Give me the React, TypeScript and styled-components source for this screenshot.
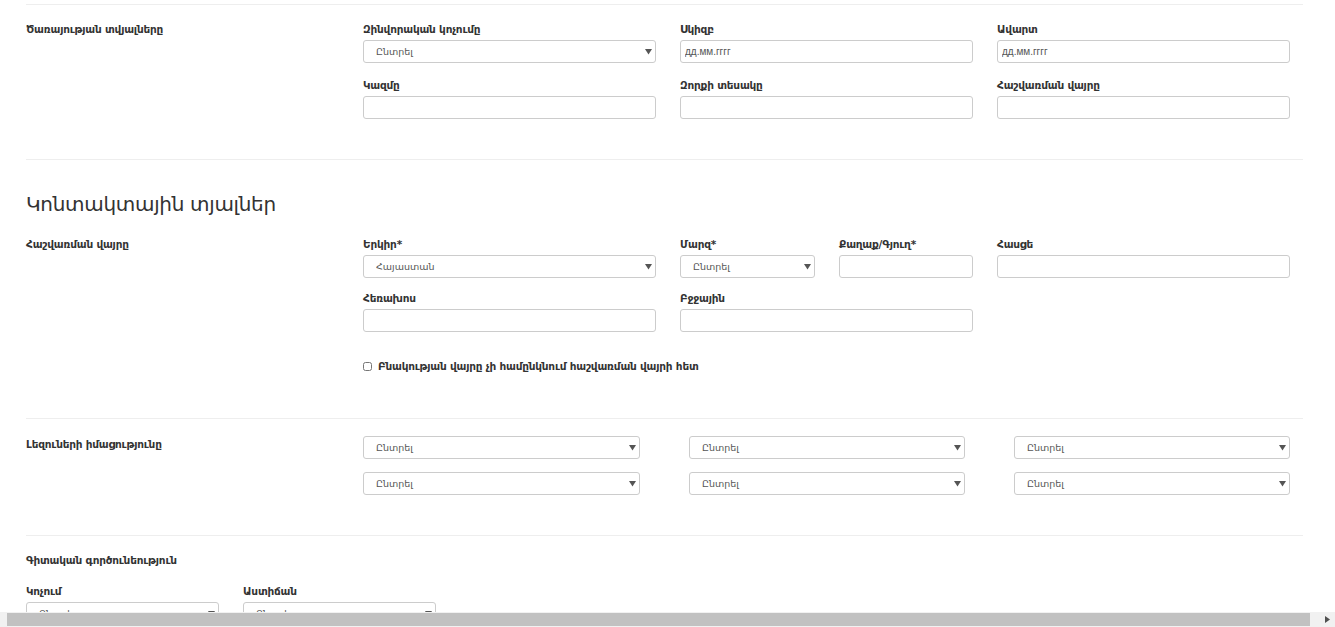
import React from 'react';
import styled, { createGlobalStyle } from 'styled-components';

const GlobalStyle = createGlobalStyle`
  html, body {
    margin: 0;
    padding: 0;
    background: #fff;
    overflow: hidden;
  }
  body {
    font-family: "DejaVu Sans", "Liberation Sans", "Noto Sans", sans-serif;
    color: #333;
  }
`;

const Page = styled.div`
  width: 1277px;
  padding: 4px 32px 0 26px;
  height: 627px;
  box-sizing: content-box;
`;

const Section = styled.section<{ $top: number; $bottom: number }>`
  border-top: 1px solid #eee;
  padding-top: ${({ $top }) => $top}px;
  padding-bottom: ${({ $bottom }) => $bottom}px;
`;

const Row = styled.div`
  display: grid;
  grid-template-columns: 337px 928px;
`;

const SideLabel = styled.div`
  font-size: 10.5px;
  font-weight: bold;
  line-height: 14px;
  letter-spacing: -0.2px;
`;

const Fields = styled.div<{ $gap?: number }>`
  display: grid;
  grid-template-columns: 293px 293px 293px;
  column-gap: 24px;
  row-gap: ${({ $gap }) => $gap ?? 15}px;
`;

const SplitCell = styled.div`
  display: grid;
  grid-template-columns: 135px 134px;
  column-gap: 24px;
`;

const LangGrid = styled.div`
  display: grid;
  grid-template-columns: 277px 276px 276px;
  column-gap: 49px;
  row-gap: 13px;
  margin-top: -1px;
`;

const Field = styled.div`
  display: flex;
  flex-direction: column;
`;

const FieldLabel = styled.label`
  font-size: 10.5px;
  font-weight: bold;
  line-height: 14px;
  margin-bottom: 4px;
  letter-spacing: -0.2px;
`;

const TextInput = styled.input`
  box-sizing: border-box;
  height: 23px;
  width: 100%;
  border: 1px solid #ccc;
  border-radius: 3px;
  padding: 0 4px;
  font-family: "Liberation Sans", sans-serif;
  font-size: 10px;
  color: #555;
  outline: none;
  &::placeholder {
    color: #555;
  }
`;

const SelectWrap = styled.div`
  position: relative;
  width: 100%;
`;

const NativeSelect = styled.select`
  appearance: none;
  box-sizing: border-box;
  width: 100%;
  height: 23px;
  border: 1px solid #ccc;
  border-radius: 3px;
  background: #fff;
  padding: 0 22px 0 12px;
  font-family: "DejaVu Sans", "Liberation Sans", sans-serif;
  font-size: 9.5px;
  color: #555;
  outline: none;
`;

const Caret = styled.svg`
  position: absolute;
  right: 4px;
  top: 8px;
  width: 7px;
  height: 7px;
  pointer-events: none;
`;

const Select = ({ value }: { value: string }) => (
  <SelectWrap>
    <NativeSelect defaultValue={value}>
      <option>{value}</option>
    </NativeSelect>
    <Caret viewBox="0 0 7 7">
      <path d="M0 1 L7 1 L3.5 6.5 Z" fill="#555" />
    </Caret>
  </SelectWrap>
);

const Heading = styled.h2`
  margin: 0 0 21px;
  font-size: 20px;
  font-weight: normal;
  line-height: 24px;
  letter-spacing: -0.3px;
`;

const CheckRow = styled.label`
  display: flex;
  align-items: center;
  gap: 6px;
  margin-top: 27px;
  font-size: 10.5px;
  font-weight: bold;
  line-height: 14px;
  letter-spacing: -0.2px;
`;

const Check = styled.input`
  margin: 0;
  width: 9px;
  height: 9px;
`;

const SubTitle = styled.div`
  font-size: 10.5px;
  font-weight: bold;
  line-height: 14px;
  margin-bottom: 17px;
  letter-spacing: -0.2px;
`;

const SmallGrid = styled.div`
  display: grid;
  grid-template-columns: 193px 193px;
  column-gap: 24px;
`;

const Scrollbar = styled.div`
  position: fixed;
  left: 0;
  right: 0;
  bottom: 0;
  height: 15px;
  background: #f1f1f1;
  display: flex;
  align-items: center;
`;

const Thumb = styled.div`
  margin-left: 7px;
  width: 1303px;
  height: 13px;
  background: #c1c1c1;
`;

const Arrow = styled.svg`
  margin-left: 15px;
  width: 5px;
  height: 7px;
`;

const App = () => (
  <>
    <GlobalStyle />
    <Page>
      <Section $top={17} $bottom={40}>
        <Row>
          <SideLabel>Ծառայության տվյալները</SideLabel>
          <Fields>
            <Field>
              <FieldLabel>Զինվորական կոչումը</FieldLabel>
              <Select value="Ընտրել" />
            </Field>
            <Field>
              <FieldLabel>Սկիզբ</FieldLabel>
              <TextInput placeholder="дд.мм.гггг" />
            </Field>
            <Field>
              <FieldLabel>Ավարտ</FieldLabel>
              <TextInput placeholder="дд.мм.гггг" />
            </Field>
            <Field>
              <FieldLabel>Կազմը</FieldLabel>
              <TextInput />
            </Field>
            <Field>
              <FieldLabel>Զորքի տեսակը</FieldLabel>
              <TextInput />
            </Field>
            <Field>
              <FieldLabel>Հաշվառման վայրը</FieldLabel>
              <TextInput />
            </Field>
          </Fields>
        </Row>
      </Section>

      <Section $top={32} $bottom={45}>
        <Heading>Կոնտակտային տյալներ</Heading>
        <Row>
          <SideLabel>Հաշվառման վայրը</SideLabel>
          <div>
            <Fields $gap={13}>
              <Field>
                <FieldLabel>Երկիր*</FieldLabel>
                <Select value="Հայաստան" />
              </Field>
              <SplitCell>
                <Field>
                  <FieldLabel>Մարզ*</FieldLabel>
                  <Select value="Ընտրել" />
                </Field>
                <Field>
                  <FieldLabel>Քաղաք/Գյուղ*</FieldLabel>
                  <TextInput />
                </Field>
              </SplitCell>
              <Field>
                <FieldLabel>Հասցե</FieldLabel>
                <TextInput />
              </Field>
              <Field>
                <FieldLabel>Հեռախոս</FieldLabel>
                <TextInput />
              </Field>
              <Field>
                <FieldLabel>Բջջային</FieldLabel>
                <TextInput />
              </Field>
            </Fields>
            <CheckRow>
              <Check type="checkbox" />
              Բնակության վայրը չի համընկնում հաշվառման վայրի հետ
            </CheckRow>
          </div>
        </Row>
      </Section>

      <Section $top={18} $bottom={40}>
        <Row>
          <SideLabel>Լեզուների իմացությունը</SideLabel>
          <LangGrid>
            {Array.from({ length: 6 }).map((_, i) => (
              <Select key={i} value="Ընտրել" />
            ))}
          </LangGrid>
        </Row>
      </Section>

      <Section $top={17} $bottom={0}>
        <SubTitle>Գիտական գործունեություն</SubTitle>
        <SmallGrid>
          <Field>
            <FieldLabel>Կոչում</FieldLabel>
            <Select value="Ընտրել" />
          </Field>
          <Field>
            <FieldLabel>Աստիճան</FieldLabel>
            <Select value="Ընտրել" />
          </Field>
        </SmallGrid>
      </Section>
    </Page>
    <Scrollbar>
      <Thumb />
      <Arrow viewBox="0 0 5 7">
        <path d="M0 0 L5 3.5 L0 7 Z" fill="#505050" />
      </Arrow>
    </Scrollbar>
  </>
);

export default App;
